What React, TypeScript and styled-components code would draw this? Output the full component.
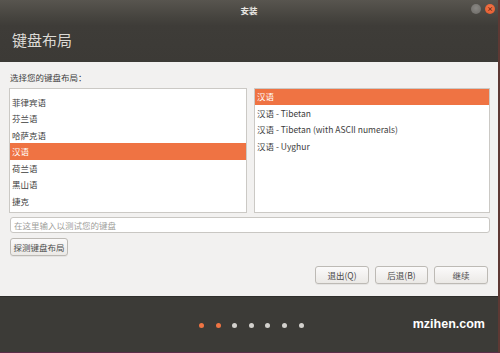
import React from "react";
import styled, { createGlobalStyle } from "styled-components";

const Global = createGlobalStyle`
  html, body { margin: 0; padding: 0; background: #3c3b37; }
  body { font-family: "Noto Sans CJK SC", "Noto Sans", sans-serif; }
  * { box-sizing: border-box; }
`;

const Window = styled.div`
  width: 500px;
  height: 353px;
  display: flex;
  flex-direction: column;
  overflow: hidden;
  border-right: 2px solid #5e3833;
  border-bottom: 1px solid #5a2d48;
  background: #3c3b37;
`;

const Header = styled.div`
  height: 62px;
  background: linear-gradient(#58554f 0px, #45433e 18px, #3e3c38 26px, #3c3a36 62px);
  display: flex;
  flex-direction: column;
  flex-shrink: 0;
`;

const TitleBar = styled.div`
  height: 20px;
  position: relative;
  display: flex;
  align-items: center;
  justify-content: center;
  color: #e8e6e2;
  font-size: 8.5px;
  font-weight: 700;
`;

const WinButtons = styled.div`
  position: absolute;
  right: 3px;
  top: 4px;
  display: flex;
  gap: 4px;
`;

const WinBtn = styled.div<{ $close?: boolean }>`
  width: 10px;
  height: 10px;
  border-radius: 50%;
  background: ${(p) => (p.$close ? "radial-gradient(circle at 50% 40%, #f4784b, #e0562a)" : "radial-gradient(circle at 50% 40%, #8a8884, #6c6a66)")};
  color: #5a1c08;
  font-size: 6px;
  line-height: 10px;
  text-align: center;
`;

const PageTitle = styled.div`
  padding: 9px 0 0 12px;
  font-size: 15px;
  color: #dcdad5;
  line-height: 22px;
`;

const Body = styled.div`
  flex: 1;
  background: #f2f1f0;
  padding: 9px 8px 12px 9px;
  display: flex;
  flex-direction: column;
`;

const Label = styled.div`
  font-size: 8.5px;
  color: #3c3c3c;
  line-height: 12px;
  padding-left: 1px;
  margin-bottom: 5px;
`;

const Lists = styled.div`
  display: grid;
  grid-template-columns: 238px 236px;
  gap: 7px;
  height: 125px;
`;

const ListBox = styled.div`
  background: #ffffff;
  border: 1px solid #cbc9c5;
  overflow: hidden;
`;

const ListInner = styled.div<{ $offset: number }>`
  padding-top: ${(p) => (p.$offset > 0 ? p.$offset : 0)}px;
  margin-top: ${(p) => (p.$offset < 0 ? p.$offset : 0)}px;
`;

const Row = styled.div<{ $sel?: boolean }>`
  height: 16.6px;
  line-height: 16.6px;
  padding-left: 2px;
  font-size: 8.5px;
  white-space: nowrap;
  color: ${(p) => (p.$sel ? "#ffffff" : "#3c3c3c")};
  background: ${(p) => (p.$sel ? "#ef7343" : "transparent")};
`;

const Input = styled.input`
  margin: 4px 0 0 1px;
  height: 16px;
  width: calc(100% - 1px);
  background: #ffffff;
  border: 1px solid #c9c7c3;
  border-radius: 3px;
  font-family: "Noto Sans CJK SC", "Noto Sans", sans-serif;
  font-size: 8.5px;
  line-height: 12px;
  color: #3c3c3c;
  padding: 1px 3px;
  outline: none;
  &::placeholder {
    color: #a09e9b;
    line-height: 12px;
  }
`;

const Button = styled.div<{ $w: number }>`
  width: ${(p) => p.$w}px;
  height: 18px;
  border: 1px solid #bdbab5;
  border-radius: 3px;
  background: linear-gradient(#fbfafa, #ebe9e6);
  font-size: 8.5px;
  color: #4a4a4a;
  display: flex;
  align-items: center;
  justify-content: center;
  box-shadow: 0 1px 0 rgba(0, 0, 0, 0.05);
`;

const DetectRow = styled.div`
  margin-top: 5px;
  margin-left: 1px;
  display: flex;
`;

const Actions = styled.div`
  margin-top: auto;
  display: flex;
  justify-content: flex-end;
  gap: 6px;
  padding-right: 2px;
`;

const Footer = styled.div`
  height: 56px;
  flex-shrink: 0;
  background: #3c3b37;
  border-top: 1px solid #2f2e2b;
  position: relative;
  display: flex;
  align-items: center;
`;

const Dots = styled.div`
  position: absolute;
  left: 199px;
  top: 26px;
  display: flex;
  gap: 11.6px;
`;

const Dot = styled.div<{ $on?: boolean }>`
  width: 5px;
  height: 5px;
  border-radius: 50%;
  background: ${(p) => (p.$on ? "#ef7443" : "#d3d1cd")};
`;

const Brand = styled.div`
  margin-left: auto;
  margin-right: 13px;
  font-family: "Liberation Sans", Arial, sans-serif;
  font-weight: 700;
  font-size: 12.5px;
  color: #ffffff;
  margin-top: -2px;
`;

const leftItems = ["菲律宾语", "芬兰语", "哈萨克语", "汉语", "荷兰语", "黑山语", "捷克", "克罗地亚语"];
const rightItems = ["汉语", "汉语 - Tibetan", "汉语 - Tibetan (with ASCII numerals)", "汉语 - Uyghur"];

export default function App() {
  return (
    <>
      <Global />
      <Window>
        <Header>
          <TitleBar>
            安装
            <WinButtons>
              <WinBtn />
              <WinBtn $close>×</WinBtn>
            </WinButtons>
          </TitleBar>
          <PageTitle>键盘布局</PageTitle>
        </Header>
        <Body>
          <Label>选择您的键盘布局：</Label>
          <Lists>
            <ListBox>
              <ListInner $offset={4.5}>
                {leftItems.map((t) => (
                  <Row key={t} $sel={t === "汉语"}>{t}</Row>
                ))}
              </ListInner>
            </ListBox>
            <ListBox>
              <ListInner $offset={-1}>
                {rightItems.map((t, i) => (
                  <Row key={t} $sel={i === 0}>{t}</Row>
                ))}
              </ListInner>
            </ListBox>
          </Lists>
          <Input placeholder="在这里输入以测试您的键盘" />
          <DetectRow>
            <Button $w={58}>探测键盘布局</Button>
          </DetectRow>
          <Actions>
            <Button $w={54}>退出(Q)</Button>
            <Button $w={53}>后退(B)</Button>
            <Button $w={54}>继续</Button>
          </Actions>
        </Body>
        <Footer>
          <Dots>
            <Dot $on />
            <Dot $on />
            <Dot />
            <Dot />
            <Dot />
            <Dot />
            <Dot />
          </Dots>
          <Brand>mzihen.com</Brand>
        </Footer>
      </Window>
    </>
  );
}
